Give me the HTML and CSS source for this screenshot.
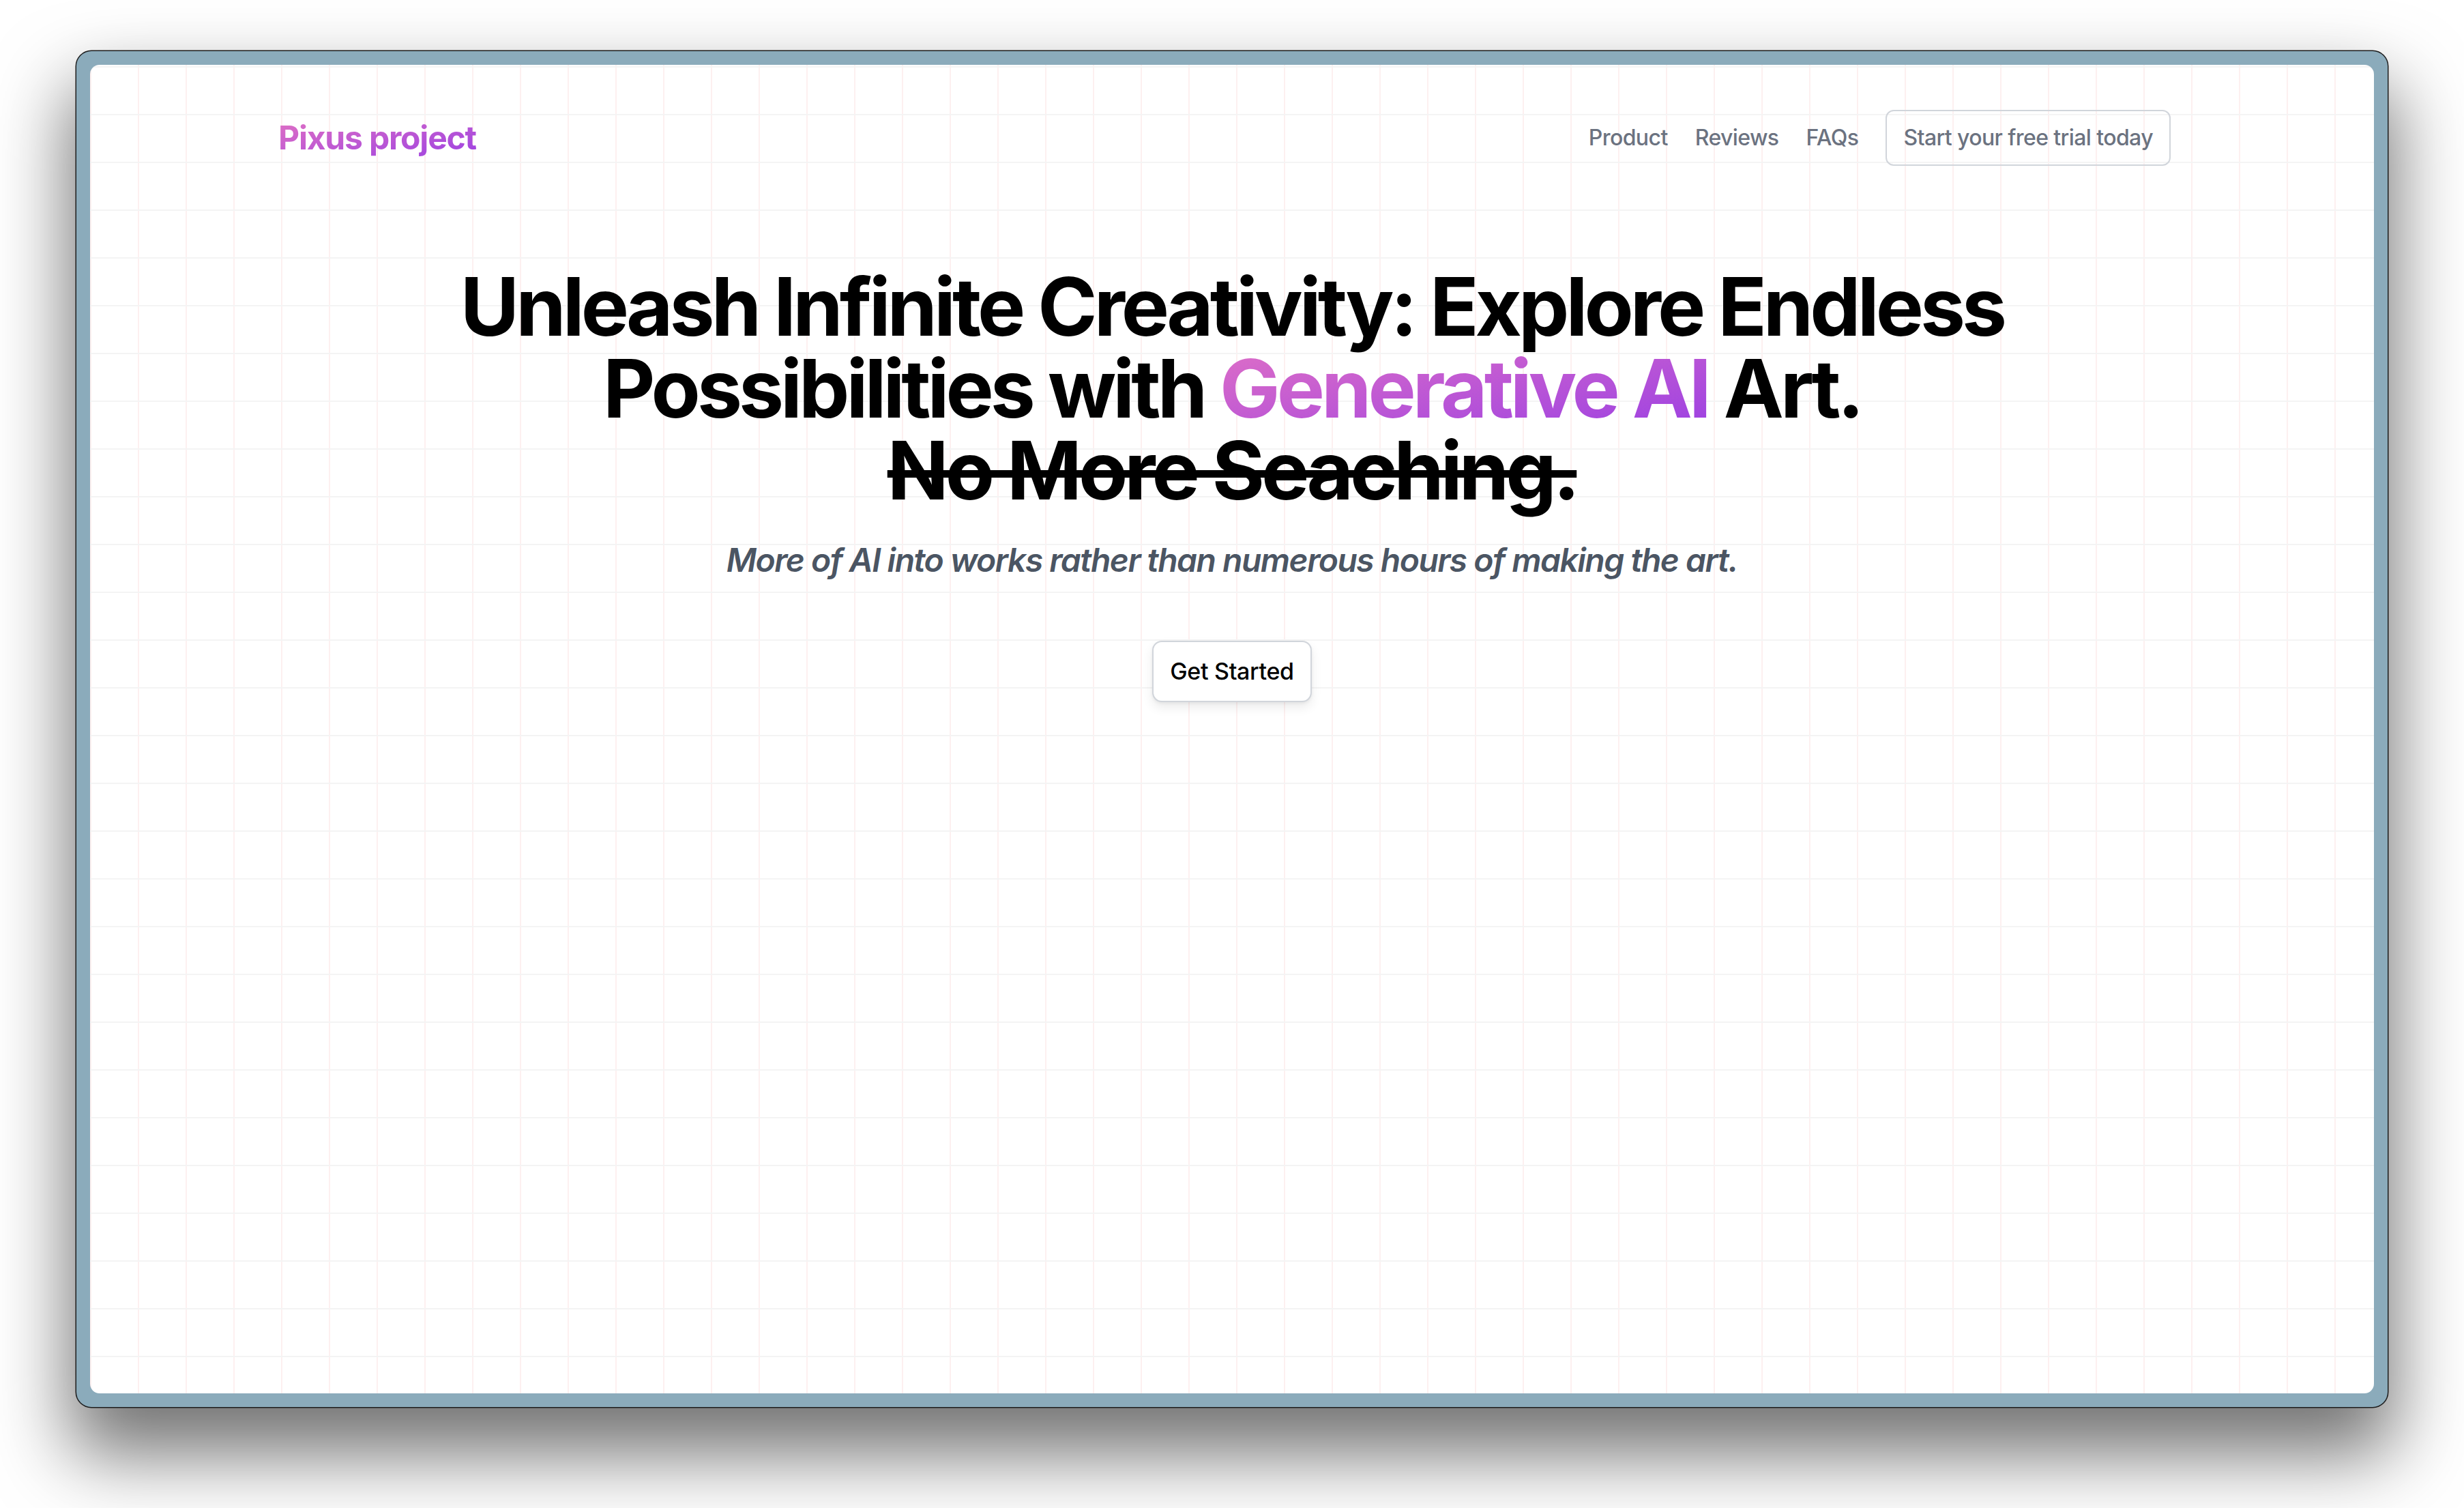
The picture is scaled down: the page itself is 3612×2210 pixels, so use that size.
FILE: index.html
```html
<!DOCTYPE html>
<html lang="en">
<head>
<meta charset="utf-8">
<title>Pixus project</title>
<link rel="stylesheet" href="styles.css">
</head>
<body>
<div class="frame">
  <div class="screen">
    <header class="nav">
      <a class="logo" href="#">Pixus project</a>
      <nav class="links">
        <a class="link" href="#">Product</a>
        <a class="link" href="#">Reviews</a>
        <a class="link" href="#">FAQs</a>
        <a class="link trial" href="#">Start your free trial today</a>
      </nav>
    </header>
    <main class="hero">
      <h1 class="title">
        <span class="line">Unleash Infinite Creativity: Explore Endless</span>
        <span class="line">Possibilities with <span class="grad">Generative AI</span> Art.</span>
        <span class="line"><span class="strike">No More Seaching.</span></span>
      </h1>
      <p class="sub">More of AI into works rather than numerous hours of making the art.</p>
      <a class="cta" href="#">Get Started</a>
    </main>
  </div>
</div>
</body>
</html>
```

FILE: styles.css
```css
html, body {
  margin: 0;
  padding: 0;
  background: #ffffff;
}

body {
  width: 3612px;
  height: 2210px;
  overflow: hidden;
  font-family: Inter, "Noto Sans", "Liberation Sans", sans-serif;
}

a {
  text-decoration: none;
}

.frame {
  box-sizing: border-box;
  margin: 75px 0 0 112px;
  width: 3388px;
  height: 1987px;
  padding: 20px;
  background-color: #8babbb;
  border-radius: 22px;
  box-shadow: 0 0 0 1.5px #1c1c1c, 0 60px 110px 10px rgba(0, 0, 0, 0.55);
}

.screen {
  box-sizing: border-box;
  height: 100%;
  border-radius: 14px;
  overflow: hidden;
  background-color: #ffffff;
  background-image:
    linear-gradient(to bottom, #f4f4f4 2px, transparent 2px),
    linear-gradient(to right, #fdf0f0 2px, transparent 2px);
  background-size: 70px 70px;
  background-position: 70px 72px;
}

.nav {
  display: flex;
  justify-content: space-between;
  align-items: center;
  padding: 66px 298px 0 276px;
}

.logo {
  font-size: 48px;
  line-height: 64px;
  font-weight: 700;
  letter-spacing: -1.2px;
  background-image: linear-gradient(to bottom right, #e272c3, #9b40e3);
  -webkit-background-clip: text;
  background-clip: text;
  color: transparent;
}

.links {
  display: flex;
  align-items: center;
  gap: 40px;
}

.link {
  font-size: 32px;
  line-height: 48px;
  font-weight: 500;
  letter-spacing: -0.6px;
  color: #6b7280;
}

.trial {
  border: 2px solid #d1d5db;
  border-radius: 12px;
  padding: 15px 24px;
}

.hero {
  display: flex;
  flex-direction: column;
  align-items: center;
  text-align: center;
  margin-top: 146px;
}

.title {
  margin: 0;
  font-size: 118px;
  line-height: 120px;
  font-weight: 700;
  letter-spacing: -5px;
  color: #000000;
}

.line {
  display: block;
  white-space: nowrap;
}

.grad {
  background-image: linear-gradient(to bottom right, #e070c6, #9a3fe3);
  -webkit-background-clip: text;
  background-clip: text;
  color: transparent;
}

.strike {
  text-decoration: line-through;
  text-decoration-thickness: 11px;
}

.sub {
  margin: 40px 0 0;
  font-size: 48px;
  line-height: 64px;
  font-style: italic;
  font-weight: 600;
  letter-spacing: -1.5px;
  color: #4b5563;
}

.cta {
  display: inline-block;
  margin-top: 86px;
  padding: 19px 24px;
  border: 2px solid #d1d5db;
  border-radius: 14px;
  background: #ffffff;
  font-size: 34px;
  line-height: 48px;
  font-weight: 500;
  letter-spacing: -0.3px;
  color: #000000;
  box-shadow: 0 8px 16px rgba(0, 0, 0, 0.08), 0 2px 4px rgba(0, 0, 0, 0.05);
}
```
